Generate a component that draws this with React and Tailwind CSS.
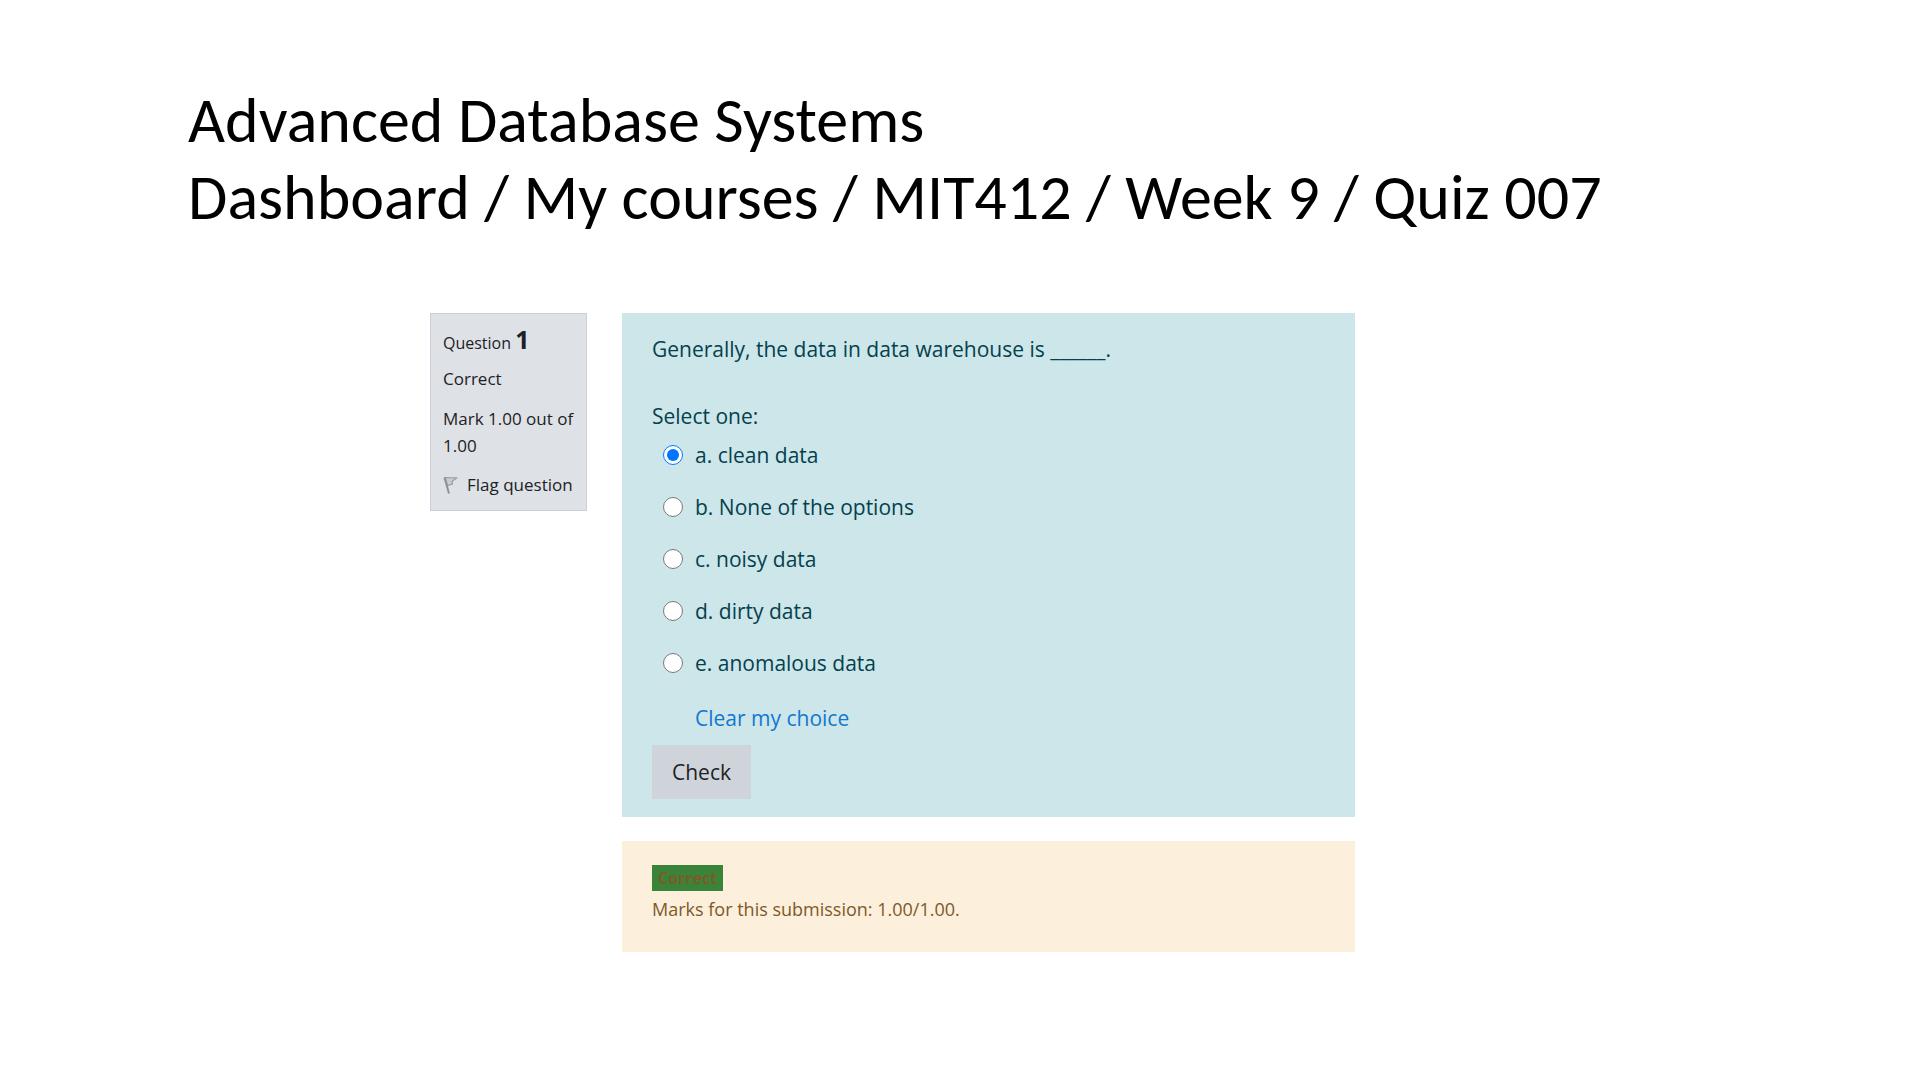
import { useState } from 'react';

const options = [
  { id: 'a', label: 'a. clean data' },
  { id: 'b', label: 'b. None of the options' },
  { id: 'c', label: 'c. noisy data' },
  { id: 'd', label: 'd. dirty data' },
  { id: 'e', label: 'e. anomalous data' },
];

function FlagIcon() {
  return (
    <svg viewBox="0 0 16 20" className="w-4 h-5 shrink-0" fill="none" aria-hidden="true">
      <path d="M2 2.5 L13.5 3 L9 6.5 L9.5 9 L4.5 10.5 Z" fill="#c9ccd0" stroke="#9a9da0" strokeWidth="1.2" />
      <path d="M1.5 2.5 L6 18.5" stroke="#909396" strokeWidth="2" />
    </svg>
  );
}

export default function App() {
  const [choice, setChoice] = useState('a');

  return (
    <div className="min-h-screen bg-white font-['Open_Sans','Noto_Sans',sans-serif]">
      {/* Page heading */}
      <header className="pt-[82px] px-[188px]">
        <h1 className="font-[Carlito,Lato,sans-serif] text-[64px] leading-[77px] text-black">
          Advanced Database Systems
          <br />
          Dashboard / My courses / MIT412 / Week 9 / Quiz 007
        </h1>
      </header>

      <main className="mt-[77px] pl-[430px] pr-[565px] pb-32 flex items-start gap-[35px]">
        {/* Question info */}
        <aside className="w-[157px] shrink-0 bg-[#dee2e6] border border-[#cad0d7] px-3 pt-[7px] pb-3 text-[17px] leading-[27px] text-[#1d2125]">
          <h2 className="text-[16px] leading-9">
            Question <span className="text-[25px] font-bold">1</span>
          </h2>
          <p className="mt-1">Correct</p>
          <p className="mt-[13px] -mr-2">Mark 1.00 out of 1.00</p>
          <a href="#flag" className="mt-3 -mr-2 flex items-center gap-2 whitespace-nowrap">
            <FlagIcon />
            Flag question
          </a>
        </aside>

        <div className="flex-1 min-w-0">
          {/* Question body */}
          <form
            onSubmit={(e) => e.preventDefault()}
            className="bg-[#cde6ea] text-[#04414d] text-[21px] leading-8 px-[30px] pt-5 pb-[18px]"
          >
            <p>Generally, the data in data warehouse is ______.</p>
            <fieldset className="mt-[35px]">
              <legend>Select one:</legend>
              <div className="mt-[7px] pl-[11px] flex flex-col gap-5">
                {options.map((option) => (
                  <label key={option.id} className="flex items-center gap-3">
                    <input
                      type="radio"
                      name="answer"
                      value={option.id}
                      checked={choice === option.id}
                      onChange={() => setChoice(option.id)}
                      className="size-5"
                    />
                    {option.label}
                  </label>
                ))}
              </div>
            </fieldset>
            <button type="button" onClick={() => setChoice('')} className="block mt-[23px] ml-[43px] text-[#1177d1]">
              Clear my choice
            </button>
            <button type="submit" className="block mt-[11px] px-5 h-[54px] bg-[#ced4da] text-[#1d2125]">
              Check
            </button>
          </form>

          {/* Feedback */}
          <section className="mt-6 bg-[#fcefdc] text-[#7d5a29] px-[30px] py-6 text-[18px] leading-[37px]">
            <div className="w-fit px-1.5 bg-[#398439] text-[16px] leading-[26px] font-bold">Correct</div>
            <p>Marks for this submission: 1.00/1.00.</p>
          </section>
        </div>
      </main>
    </div>
  );
}
